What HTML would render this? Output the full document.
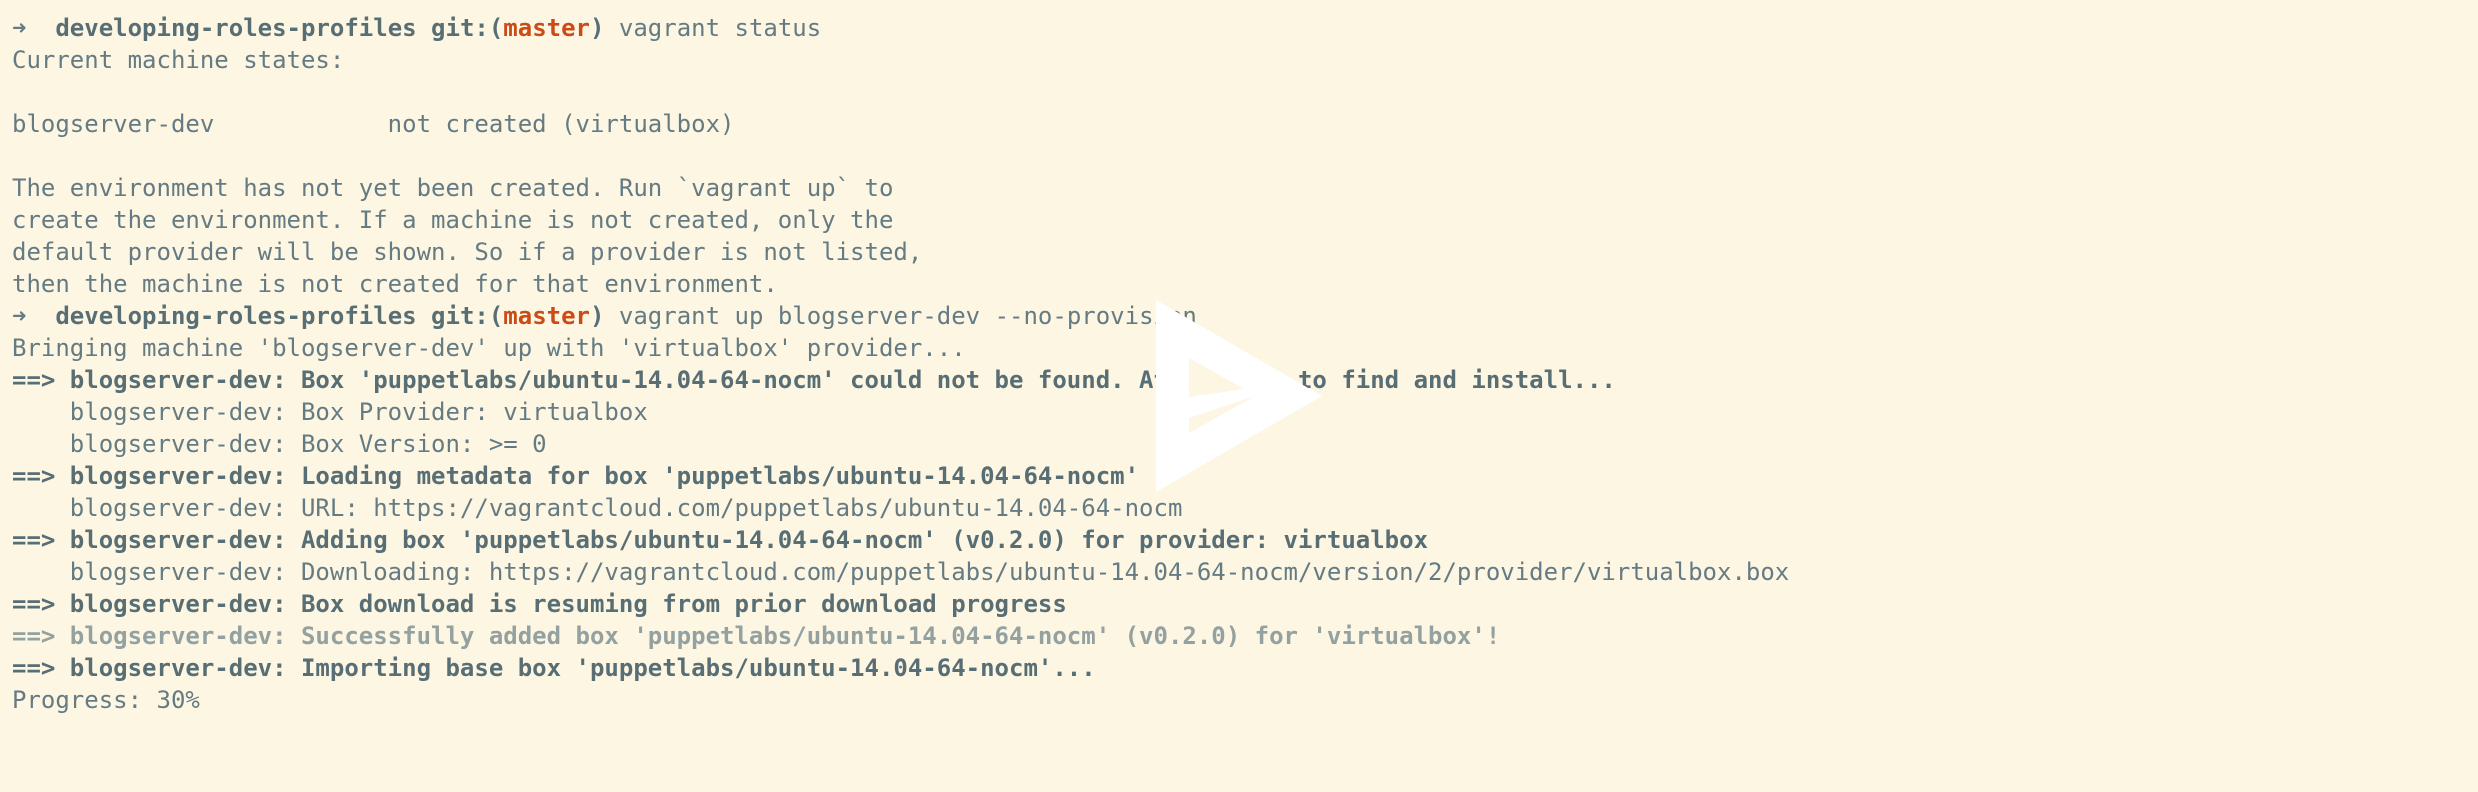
<!DOCTYPE html>
<html><head><meta charset="utf-8"><style>
html,body{margin:0;padding:0;background:#fdf6e3;width:2478px;height:792px;overflow:hidden}
pre{margin:0;position:absolute;left:12px;top:12px;font-family:"DejaVu Sans Mono","Liberation Mono",monospace;font-size:24px;line-height:32px;color:#657b83;white-space:pre}
b{color:#586e75;font-weight:bold}
.o{color:#cb4b16;font-weight:bold}
.g{color:#93a1a1;font-weight:bold}
svg{position:absolute;left:0;top:0}
</style></head><body>
<pre>➜  <b>developing-roles-profiles</b> <b>git:(</b><span class="o">master</span><b>)</b> vagrant status
Current machine states:

blogserver-dev            not created (virtualbox)

The environment has not yet been created. Run `vagrant up` to
create the environment. If a machine is not created, only the
default provider will be shown. So if a provider is not listed,
then the machine is not created for that environment.
➜  <b>developing-roles-profiles</b> <b>git:(</b><span class="o">master</span><b>)</b> vagrant up blogserver-dev --no-provision
Bringing machine 'blogserver-dev' up with 'virtualbox' provider...
<b>==&gt; blogserver-dev: Box 'puppetlabs/ubuntu-14.04-64-nocm' could not be found. Attempting to find and install...</b>
    blogserver-dev: Box Provider: virtualbox
    blogserver-dev: Box Version: &gt;= 0
<b>==&gt; blogserver-dev: Loading metadata for box 'puppetlabs/ubuntu-14.04-64-nocm'</b>
    blogserver-dev: URL: https://vagrantcloud.com/puppetlabs/ubuntu-14.04-64-nocm
<b>==&gt; blogserver-dev: Adding box 'puppetlabs/ubuntu-14.04-64-nocm' (v0.2.0) for provider: virtualbox</b>
    blogserver-dev: Downloading: https://vagrantcloud.com/puppetlabs/ubuntu-14.04-64-nocm/version/2/provider/virtualbox.box
<b>==&gt; blogserver-dev: Box download is resuming from prior download progress</b>
<span class="g">==&gt; blogserver-dev: Successfully added box 'puppetlabs/ubuntu-14.04-64-nocm' (v0.2.0) for 'virtualbox'!</span>
<b>==&gt; blogserver-dev: Importing base box 'puppetlabs/ubuntu-14.04-64-nocm'...</b>
Progress: 30%</pre>
<svg width="2478" height="792" viewBox="0 0 2478 792">
<polygon points="1156,300 1322,396 1156,492" fill="#fff"/>
<polygon points="1189,358 1244,389 1189,397" fill="#fdf6e3"/>
<polygon points="1189,418 1255,396 1189,433" fill="#fdf6e3"/>
</svg>
</body></html>
